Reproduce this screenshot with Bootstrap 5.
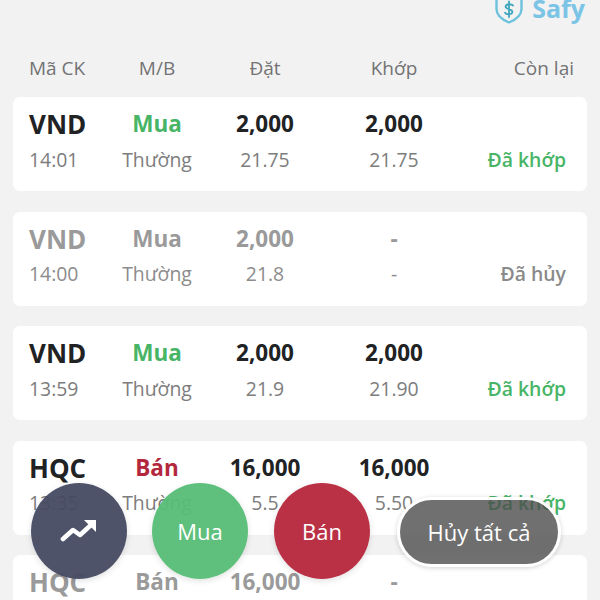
<!DOCTYPE html>
<html lang="en">
<head>
<meta charset="UTF-8" />
<meta name="viewport" content="width=device-width, initial-scale=1" />
<title>Safy orders</title>
<link href="https://cdn.jsdelivr.net/npm/bootstrap@5.3.3/dist/css/bootstrap.min.css" rel="stylesheet" />
<style>
  html, body { height: 100%; }
  body {
    background: #f2f2f3;
    font-family: "Open Sans", sans-serif;
    overflow: hidden;
    height: 600px;
    position: relative;
  }
  .top-logo {
    height: 24px;
    overflow: hidden;
    padding-right: 15px;
    gap: 9px;
  }
  .top-logo svg { flex: none; }
  .logo-word {
    font-size: 25px;
    font-weight: 700;
    line-height: 24px;
    color: #7cc4e6;
    margin-bottom: 4px;
  }
  .order-cols {
    display: grid;
    grid-template-columns: 91px 74px 142px 116px 114px;
    align-items: center;
  }
  .head-row {
    padding: 15px 21px 0 29px;
    height: 73px;
    font-size: 19px;
    line-height: 28px;
    color: #737373;
  }
  .head-last { margin-right: -8px; }
  .order-list { padding: 0 13px; gap: 20.5px; }
  .order-item {
    background: #fff;
    border-radius: 7px;
    height: 94px;
    padding: 11px 21px 0 16px;
    flex: none;
  }
  .cell-big {
    font-size: 22.5px;
    font-weight: 700;
    line-height: 32px;
    color: #212224;
    height: 32px;
  }
  .cell-big.code { font-size: 26px; }
  .cell-sub {
    margin-top: 5.5px;
    font-size: 19.4px;
    line-height: 28px;
    color: #7d7d7d;
  }
  .txt-buy { color: #48b566; }
  .txt-sell { color: #b3283c; }
  .txt-done { color: #48b566; font-weight: 600; }
  .txt-off { color: #8a8a8a; font-weight: 600; }
  .is-off .cell-big { color: #9a9a9a; }
  .is-off .cell-sub { color: #8c8c8c; }
  .fab-bar {
    position: absolute;
    left: 31px;
    top: 483px;
    gap: 25px;
  }
  .fab {
    width: 96px;
    height: 96px;
    border-radius: 50%;
    border: 0;
    padding: 0;
    color: #fff;
    font-size: 22px;
    font-weight: 500;
    box-shadow: 0 2px 6px rgba(0, 0, 0, .12);
    flex: none;
  }
  .fab-chart { background: rgba(70, 74, 98, .95); }
  .fab-buy { background: rgba(86, 189, 118, .95); }
  .fab-sell { background: rgba(182, 38, 60, .95); margin-left: 1px; }
  .fab-clear {
    height: 70px;
    width: 164px;
    border-radius: 35px;
    background: rgba(76, 76, 76, .8);
    border: 3px solid #fff;
    color: #fff;
    font-size: 22px;
    font-weight: 500;
    padding: 0;
    margin: 14px 0 0 2px;
    box-shadow: 0 1px 5px rgba(0, 0, 0, .18);
    flex: none;
  }
</style>
</head>
<body>
  <div class="top-logo d-flex justify-content-end align-items-end">
    <svg width="28" height="30" viewBox="0 0 28 30" fill="none">
      <path d="M14 1.5 L26.5 5 V15 C26.5 21.5 20 26 14 28.5 C8 26 1.5 21.5 1.5 15 V5 Z" stroke="#6dc3dc" stroke-width="2.4" stroke-linejoin="round"/>
      <path d="M18 11.5 C17 9.8 11 9.5 10.6 12.6 C10.3 15.6 17.6 14.6 17.4 18 C17.2 21 11.2 20.8 10 18.8 M14 7.5 V23" stroke="#3fa7bd" stroke-width="1.8" stroke-linecap="round"/>
    </svg>
    <span class="logo-word">Safy</span>
  </div>

  <div class="order-cols head-row">
    <div>Mã CK</div>
    <div class="text-center">M/B</div>
    <div class="text-center">Đặt</div>
    <div class="text-center">Khớp</div>
    <div class="text-end head-last">Còn lại</div>
  </div>

  <div class="order-list d-flex flex-column">
    <div class="order-item">
      <div class="order-cols cell-big">
        <div class="code cell-big">VND</div>
        <div class="text-center txt-buy">Mua</div>
        <div class="text-center">2,000</div>
        <div class="text-center">2,000</div>
        <div></div>
      </div>
      <div class="order-cols cell-sub">
        <div>14:01</div>
        <div class="text-center text-nowrap">Thường</div>
        <div class="text-center">21.75</div>
        <div class="text-center">21.75</div>
        <div class="text-end txt-done">Đã khớp</div>
      </div>
    </div>

    <div class="order-item is-off">
      <div class="order-cols cell-big">
        <div class="code cell-big">VND</div>
        <div class="text-center">Mua</div>
        <div class="text-center">2,000</div>
        <div class="text-center">-</div>
        <div></div>
      </div>
      <div class="order-cols cell-sub">
        <div>14:00</div>
        <div class="text-center text-nowrap">Thường</div>
        <div class="text-center">21.8</div>
        <div class="text-center">-</div>
        <div class="text-end txt-off">Đã hủy</div>
      </div>
    </div>

    <div class="order-item">
      <div class="order-cols cell-big">
        <div class="code cell-big">VND</div>
        <div class="text-center txt-buy">Mua</div>
        <div class="text-center">2,000</div>
        <div class="text-center">2,000</div>
        <div></div>
      </div>
      <div class="order-cols cell-sub">
        <div>13:59</div>
        <div class="text-center text-nowrap">Thường</div>
        <div class="text-center">21.9</div>
        <div class="text-center">21.90</div>
        <div class="text-end txt-done">Đã khớp</div>
      </div>
    </div>

    <div class="order-item">
      <div class="order-cols cell-big">
        <div class="code cell-big">HQC</div>
        <div class="text-center txt-sell">Bán</div>
        <div class="text-center">16,000</div>
        <div class="text-center">16,000</div>
        <div></div>
      </div>
      <div class="order-cols cell-sub">
        <div>13:35</div>
        <div class="text-center text-nowrap">Thường</div>
        <div class="text-center">5.5</div>
        <div class="text-center">5.50</div>
        <div class="text-end txt-done">Đã khớp</div>
      </div>
    </div>

    <div class="order-item is-off">
      <div class="order-cols cell-big">
        <div class="code cell-big">HQC</div>
        <div class="text-center">Bán</div>
        <div class="text-center">16,000</div>
        <div class="text-center">-</div>
        <div></div>
      </div>
    </div>
  </div>

  <div class="fab-bar d-flex align-items-start">
    <button class="fab fab-chart d-flex align-items-center justify-content-center" aria-label="Chart">
      <svg width="38" height="24" viewBox="0 0 38 24" fill="none">
        <path d="M3 20 L13 11 L20 16 L31 6" stroke="#fff" stroke-width="4.6" stroke-linecap="round" stroke-linejoin="round"/>
        <path d="M24 1 H36 V13 Z" fill="#fff"/>
      </svg>
    </button>
    <button class="fab fab-buy">Mua</button>
    <button class="fab fab-sell">Bán</button>
    <button class="fab-clear">Hủy tất cả</button>
  </div>

  <script src="https://cdn.jsdelivr.net/npm/bootstrap@5.3.3/dist/js/bootstrap.bundle.min.js"></script>
</body>
</html>
